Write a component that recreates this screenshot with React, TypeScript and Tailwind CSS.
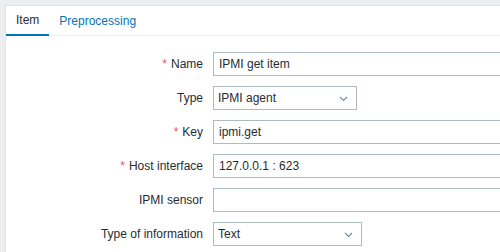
import { ReactNode } from "react"

function Chevron() {
  return (
    <svg width="9" height="6" viewBox="0 0 9 6" className="absolute right-[8px] top-[9px]">
      <path d="M1 1l3.5 3.5L8 1" fill="none" stroke="#768d99" strokeWidth="1.2" />
    </svg>
  )
}

function Row({ label, required, children }: { label: string; required?: boolean; children: ReactNode }) {
  return (
    <div className="flex items-center h-[24px]">
      <label className="w-[197px] pr-0 text-right shrink-0 whitespace-nowrap">
        {required && <span className="text-[#e45959] mr-[4px]">*</span>}
        {label}
      </label>
      <div className="ml-[10px] shrink-0">{children}</div>
    </div>
  )
}

function TextBox({ value, width }: { value: string; width: string }) {
  return (
    <div className={`h-[24px] ${width} border border-[#acbbc2] bg-white px-[5px] flex items-center whitespace-nowrap`}>
      {value}
    </div>
  )
}

function Select({ value, width }: { value: string; width: string }) {
  return (
    <div className={`relative h-[24px] ${width} border border-[#acbbc2] bg-white pl-[4px] flex items-center`}>
      {value}
      <Chevron />
    </div>
  )
}

export default function App() {
  return (
    <div className="w-[500px] h-[252px] overflow-hidden bg-[#ebeef0] pl-[5px] pt-[5px] font-['Liberation_Sans',Arial,sans-serif] text-[12px] text-[#1f2c33]">
      <div className="w-[600px] h-[300px] bg-white border-l border-t border-[#dfe4e7]">
        <ul className="flex h-[30px] border-b border-[#ebeef0]">
          <li className="px-[10px] h-[30px] flex items-center border-b-2 border-[#0275b8] mb-[-1px]">Item</li>
          <li className="px-[10px] h-[30px] flex items-center text-[#0275b8]">Preprocessing</li>
        </ul>
        <div className="pt-[16px] flex flex-col gap-[10px]">
          <Row label="Name" required>
            <TextBox value="IPMI get item" width="w-[453px]" />
          </Row>
          <Row label="Type">
            <Select value="IPMI agent" width="w-[144px]" />
          </Row>
          <Row label="Key" required>
            <TextBox value="ipmi.get" width="w-[453px]" />
          </Row>
          <Row label="Host interface" required>
            <TextBox value="127.0.0.1 : 623" width="w-[453px]" />
          </Row>
          <Row label="IPMI sensor">
            <TextBox value="" width="w-[453px]" />
          </Row>
          <Row label="Type of information">
            <Select value="Text" width="w-[149px]" />
          </Row>
        </div>
      </div>
    </div>
  )
}
